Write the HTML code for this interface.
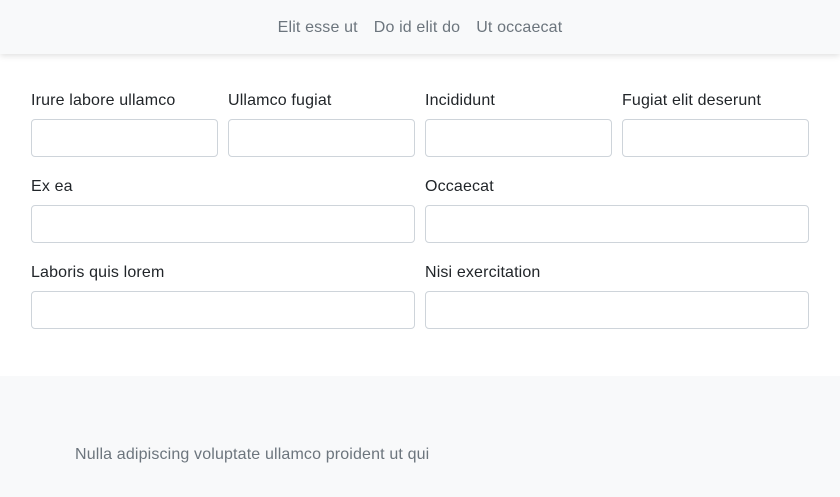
<!DOCTYPE html>
<html><head><style>
*{box-sizing:border-box;margin:0;padding:0}
body{width:840px;height:497px;overflow:hidden;background:#fff;font-family:"Liberation Sans",sans-serif;color:#212529;position:relative;letter-spacing:0.15px}
.nav{position:absolute;top:0;left:0;width:840px;height:54px;background:#f8f9fa;box-shadow:0 2px 6px rgba(0,0,0,.12);text-align:center;font-size:16px;color:#6c757d;line-height:56px;z-index:2}
.nav span{margin:0 8px}
.lbl{position:absolute;font-size:16px}
.in{position:absolute;height:38px;border:1px solid #ced4da;border-radius:4px;background:#fff}
.foot{position:absolute;top:376px;left:0;width:840px;height:121px;background:#f8f9fa}
.foot p{position:absolute;left:75px;top:70px;font-size:16px;color:#6c757d}
</style></head><body>
<div class="nav"><span>Elit esse ut</span><span>Do id elit do</span><span>Ut occaecat</span></div>
<div class="lbl" style="left:31px;top:92px">Irure labore ullamco</div>
<div class="lbl" style="left:228px;top:92px">Ullamco fugiat</div>
<div class="lbl" style="left:425px;top:92px">Incididunt</div>
<div class="lbl" style="left:622px;top:92px">Fugiat elit deserunt</div>
<div class="in" style="left:31px;top:119px;width:187px"></div>
<div class="in" style="left:228px;top:119px;width:187px"></div>
<div class="in" style="left:425px;top:119px;width:187px"></div>
<div class="in" style="left:622px;top:119px;width:187px"></div>
<div class="lbl" style="left:31px;top:178px">Ex ea</div>
<div class="lbl" style="left:425px;top:178px">Occaecat</div>
<div class="in" style="left:31px;top:205px;width:384px"></div>
<div class="in" style="left:425px;top:205px;width:384px"></div>
<div class="lbl" style="left:31px;top:264px">Laboris quis lorem</div>
<div class="lbl" style="left:425px;top:264px">Nisi exercitation</div>
<div class="in" style="left:31px;top:291px;width:384px"></div>
<div class="in" style="left:425px;top:291px;width:384px"></div>
<div class="foot"><p>Nulla adipiscing voluptate ullamco proident ut qui</p></div>
</body></html>
